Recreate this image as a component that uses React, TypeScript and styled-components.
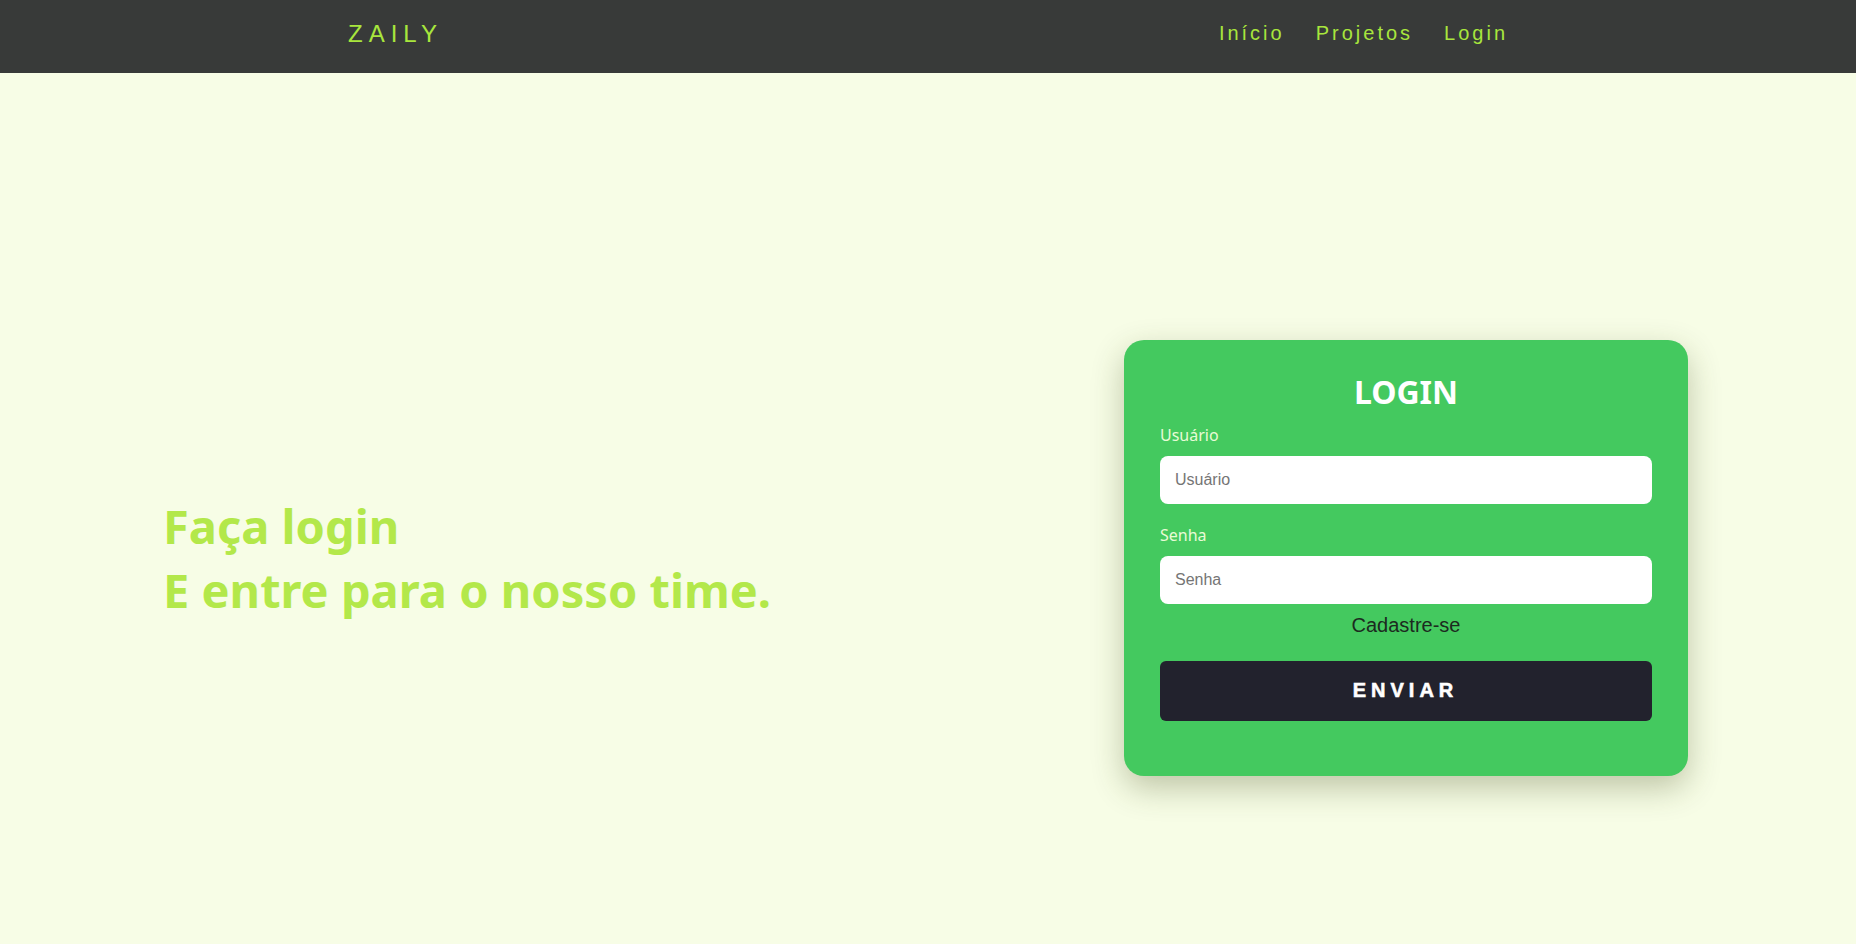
import React from "react";
import styled, { createGlobalStyle } from "styled-components";

const GlobalStyle = createGlobalStyle`
  * { box-sizing: border-box; }
  html, body { margin: 0; padding: 0; }
  body {
    background: #f7fde6;
    font-family: "Noto Sans", "Open Sans", sans-serif;
    overflow: hidden;
  }
`;

const Header = styled.header`
  height: 73px;
  background: #383a39;
  display: flex;
  justify-content: center;
  align-items: center;
  padding-bottom: 6px;
`;

const HeaderInner = styled.div`
  width: 1160px;
  display: flex;
  justify-content: space-between;
  align-items: center;
`;

const Logo = styled.div`
  font-family: "Liberation Sans", Arial, sans-serif;
  font-size: 24px;
  letter-spacing: 6px;
  color: #a8e63d;
`;

const Nav = styled.nav`
  display: flex;
  gap: 31px;
`;

const NavLink = styled.a`
  font-family: "Liberation Sans", Arial, sans-serif;
  font-size: 20px;
  letter-spacing: 3px;
  color: #a8e63d;
  text-decoration: none;
`;

const Main = styled.main`
  height: 871px;
  padding: 99px 168px 0 163px;
  display: flex;
  justify-content: space-between;
  align-items: center;
`;

const Hero = styled.h1`
  margin: 0;
  font-family: "Noto Sans", "Open Sans", sans-serif;
  font-weight: 700;
  font-size: 47px;
  line-height: 64px;
  color: #b3e84a;
`;

const Card = styled.form`
  width: 564px;
  background: #44c95f;
  border-radius: 20px;
  padding: 30px 36px 55px;
  display: flex;
  flex-direction: column;
  box-shadow: 0 12px 32px rgba(60, 70, 20, 0.3);
`;

const Title = styled.h2`
  margin: 0 0 10px;
  text-align: center;
  font-family: "Noto Sans", sans-serif;
  font-weight: 700;
  font-size: 32px;
  line-height: 43.6px;
  color: #ffffff;
`;

const Label = styled.label`
  font-family: "Noto Sans", sans-serif;
  font-size: 16px;
  line-height: 22px;
  color: #e9fbd6;
  margin-bottom: 10px;
`;

const Input = styled.input<{ $last?: boolean }>`
  height: 48px;
  width: 100%;
  border: none;
  border-radius: 8px;
  background: #ffffff;
  padding: 0 15px;
  font-family: "Liberation Sans", Arial, sans-serif;
  font-size: 16px;
  color: #333;
  margin-bottom: ${(p) => (p.$last ? "10px" : "20px")};
  outline: none;
  &::placeholder { color: #757575; }
`;

const SignUp = styled.a`
  align-self: center;
  font-family: "Liberation Sans", Arial, sans-serif;
  font-size: 20px;
  line-height: 23px;
  color: #1c2a20;
  text-decoration: none;
  margin-bottom: 24px;
`;

const Button = styled.button`
  height: 60px;
  width: 100%;
  border: none;
  border-radius: 6px;
  background: #22222d;
  color: #ffffff;
  font-family: "Liberation Sans", Arial, sans-serif;
  font-weight: 700;
  font-size: 20px;
  letter-spacing: 5px;
  padding-left: 5px;
  -webkit-text-stroke: 0.6px #ffffff;
  cursor: pointer;
`;

export default function App() {
  return (
    <>
      <GlobalStyle />
      <Header>
        <HeaderInner>
          <Logo>ZAILY</Logo>
          <Nav>
            <NavLink href="#">Início</NavLink>
            <NavLink href="#">Projetos</NavLink>
            <NavLink href="#">Login</NavLink>
          </Nav>
        </HeaderInner>
      </Header>
      <Main>
        <Hero>
          Faça login
          <br />
          E entre para o nosso time.
        </Hero>
        <Card onSubmit={(e) => e.preventDefault()}>
          <Title>LOGIN</Title>
          <Label htmlFor="user">Usuário</Label>
          <Input id="user" placeholder="Usuário" />
          <Label htmlFor="pass">Senha</Label>
          <Input id="pass" type="password" placeholder="Senha" $last />
          <SignUp href="#">Cadastre-se</SignUp>
          <Button type="submit">ENVIAR</Button>
        </Card>
      </Main>
    </>
  );
}
